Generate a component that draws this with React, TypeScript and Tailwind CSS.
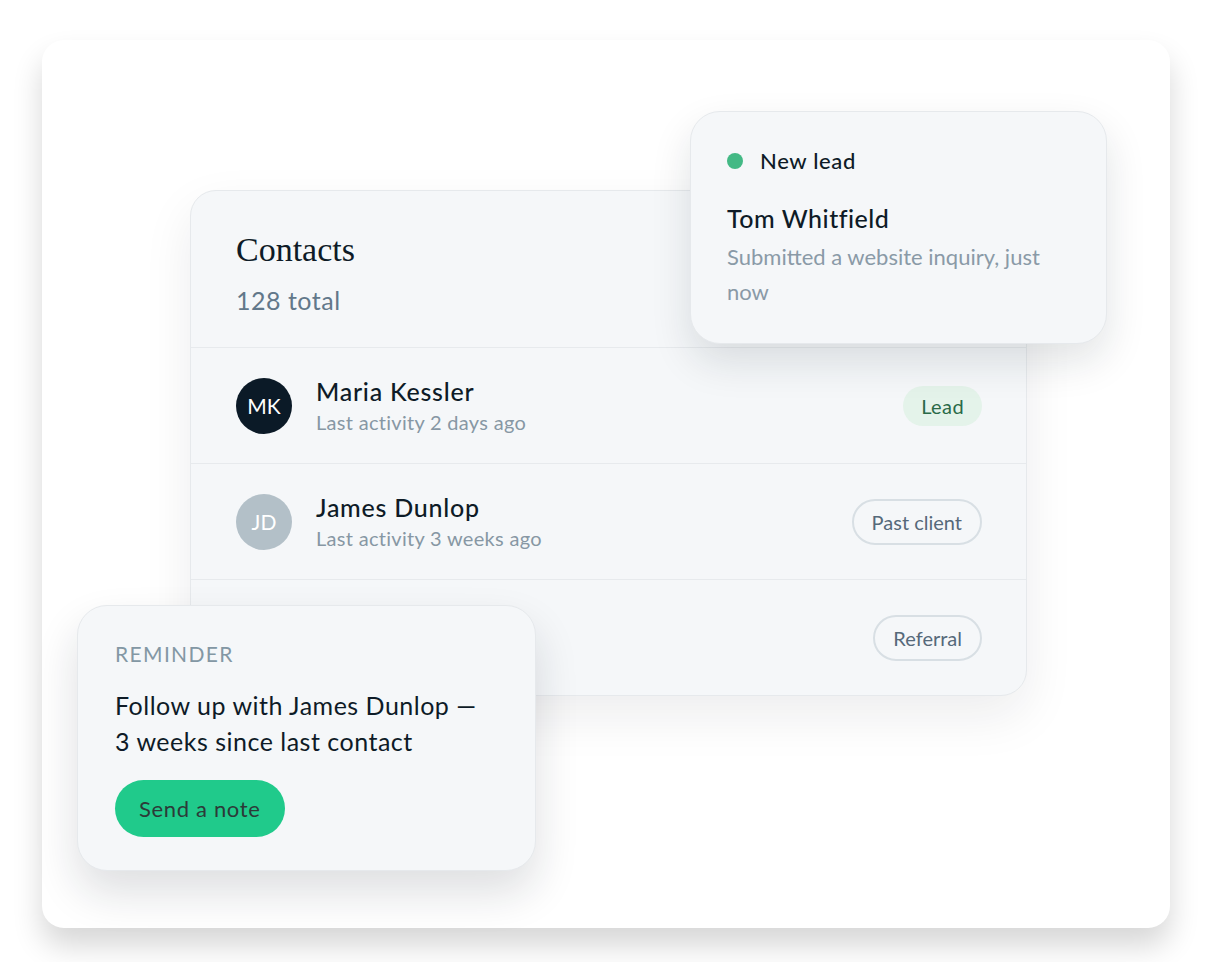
const sans = "font-['Lato','Noto_Sans',sans-serif]";

type Row = {
  initials: string;
  name: string;
  activity: string;
  avatar: string;
  badge: string;
  badgeClass: string;
};

const rows: Row[] = [
  {
    initials: "MK",
    name: "Maria Kessler",
    activity: "Last activity 2 days ago",
    avatar: "bg-[#0b1a27]",
    badge: "Lead",
    badgeClass: "h-10 px-[18px] bg-[#e4f3ea] text-[#2a6a48] tracking-[0.02em]",
  },
  {
    initials: "JD",
    name: "James Dunlop",
    activity: "Last activity 3 weeks ago",
    avatar: "bg-[#b3c0c8]",
    badge: "Past client",
    badgeClass: "h-[46px] px-[18px] border-2 border-[#d8dfe4] text-[#56697a]",
  },
  {
    initials: "",
    name: "",
    activity: "",
    avatar: "",
    badge: "Referral",
    badgeClass: "h-[46px] px-[18px] border-2 border-[#d8dfe4] text-[#56697a]",
  },
];

function ContactRow({ row }: { row: Row }) {
  return (
    <div className="flex h-[116px] items-center justify-between border-t border-[#e7eaed] pl-[45px] pr-[44px]">
      <div className="flex items-center gap-6">
        {row.initials ? (
          <>
            <div
              className={`flex h-14 w-14 items-center justify-center rounded-full text-[21px] text-white ${row.avatar}`}
            >
              {row.initials}
            </div>
            <div className="flex flex-col">
              <span className="text-[25px] leading-[32px] font-medium tracking-[0.03em] text-[#0e1b27]">
                {row.name}
              </span>
              <span className="mt-px text-[20px] leading-[28px] tracking-[0.015em] text-[#8797a4]">
                {row.activity}
              </span>
            </div>
          </>
        ) : null}
      </div>
      <span className={`flex items-center rounded-full text-[20px] ${row.badgeClass}`}>{row.badge}</span>
    </div>
  );
}

export default function App() {
  return (
    <div className={`min-h-[962px] w-[1212px] bg-white pt-10 pl-[42px] ${sans}`}>
      <div className="relative h-[888px] w-[1128px] rounded-[22px] bg-white pt-[150px] pl-[148px] shadow-[0_18px_30px_rgba(0,0,0,0.16)]">
        {/* main contacts card */}
        <div className="w-[837px] overflow-hidden rounded-[26px] border border-[#e6e9ec] bg-[#f5f7f9] shadow-[0_20px_50px_rgba(20,30,40,0.08)]">
          <div className="h-[156px] pl-[45px] pt-[37px]">
            <h2 className="font-['Liberation_Serif',serif] text-[34px] leading-[44px] text-[#0e1b27]">Contacts</h2>
            <p className="mt-[12px] text-[25px] leading-[32px] tracking-[0.02em] text-[#62788a]">128 total</p>
          </div>
          {rows.map((r) => (
            <ContactRow key={r.badge} row={r} />
          ))}
        </div>

        {/* new lead toast */}
        <div className="absolute top-[71px] left-[648px] w-[417px] rounded-[30px] border border-[#e6e9ec] bg-[#f5f7f9] px-9 pt-[34px] pb-[34px] shadow-[0_18px_40px_rgba(20,30,40,0.12)]">
          <div className="flex items-center gap-[17px]">
            <span className="h-4 w-4 rounded-full bg-[#43b985]" />
            <span className="text-[22px] leading-[30px] font-medium tracking-[0.03em] text-[#0e1b27]">New lead</span>
          </div>
          <p className="mt-[26px] text-[25px] leading-[32px] font-medium tracking-[0.02em] text-[#0e1b27]">
            Tom Whitfield
          </p>
          <p className="mt-[5px] text-[22px] leading-[35px] text-[#8a9aa7]">Submitted a website inquiry, just now</p>
        </div>

        {/* reminder card */}
        <div className="absolute top-[565px] left-[35px] w-[459px] rounded-[30px] border border-[#e6e9ec] bg-[#f5f7f9] px-[37px] pt-[34px] pb-[33px] shadow-[0_22px_44px_rgba(20,30,40,0.14)]">
          <p className="text-[21px] leading-[28px] tracking-[0.065em] text-[#8397a4]">REMINDER</p>
          <p className="mt-[19px] text-[25px] leading-[36px] tracking-[0.02em] text-[#0e1b27]">
            Follow up with James Dunlop —<br />3 weeks since last contact
          </p>
          <button
            type="button"
            className="mt-[21px] h-[57px] rounded-full bg-[#20ca8b] px-6 text-[22px] tracking-[0.03em] text-[#2c3a38]"
          >
            Send a note
          </button>
        </div>
      </div>
    </div>
  );
}
